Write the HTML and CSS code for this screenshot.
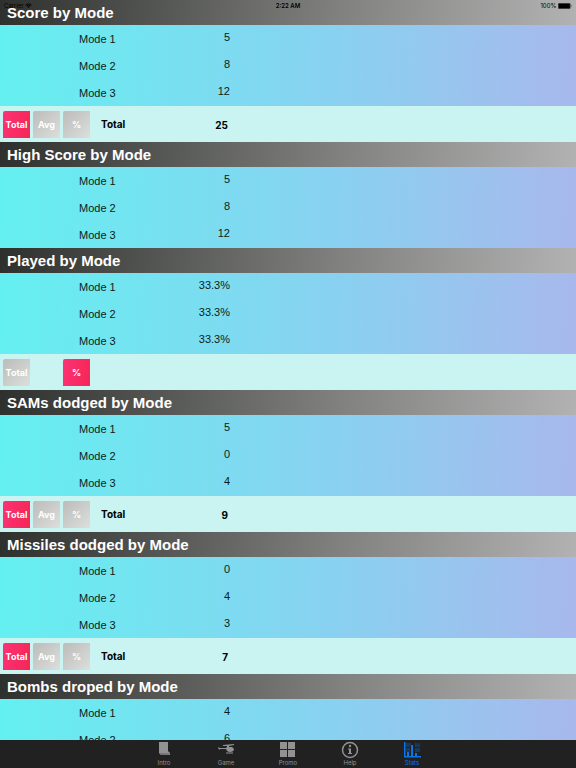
FILE: index.html
```html
<!DOCTYPE html>
<html lang="en">
<head>
  <meta charset="UTF-8" />
  <meta name="viewport" content="width=device-width, initial-scale=1.0" />
  <title>Stats</title>
  <link rel="stylesheet" href="styles.css">
</head>
<body>
  <div class="status-bar">
    <span class="carrier">Carrier
      <svg class="wifi" viewBox="0 0 14 10"><path d="M1 4a9 9 0 0 1 12 0M3 6a6 6 0 0 1 8 0" fill="none" stroke="currentColor" stroke-width="1.8"/><path d="M4.6 7.2a4 4 0 0 1 4.8 0L7 10z" fill="currentColor"/></svg>
    </span>
    <span class="time">2:22 AM</span>
    <span class="battery">100%
      <svg class="battery-icon" viewBox="0 0 28 12"><rect x="0.5" y="0.5" width="24" height="11" rx="2" fill="#555" stroke="#222"/><rect x="1.5" y="1.5" width="22" height="9" rx="1"/><path d="M26 4q2 2 0 4z"/></svg>
    </span>
  </div>

  <main class="stats">
    <section>
      <h2>Score by Mode</h2>
      <table>
        <tr><th scope="row">Mode 1</th><td>5</td></tr>
        <tr><th scope="row">Mode 2</th><td>8</td></tr>
        <tr><th scope="row">Mode 3</th><td>12</td></tr>
      </table>
      <div class="summary">
        <div class="buttons">
          <button type="button" class="active">Total</button>
          <button type="button">Avg</button>
          <button type="button">%</button>
        </div>
        <span class="label">Total</span>
        <span class="sum">25</span>
      </div>
    </section>

    <section>
      <h2>High Score by Mode</h2>
      <table>
        <tr><th scope="row">Mode 1</th><td>5</td></tr>
        <tr><th scope="row">Mode 2</th><td>8</td></tr>
        <tr><th scope="row">Mode 3</th><td>12</td></tr>
      </table>
    </section>

    <section>
      <h2>Played by Mode</h2>
      <table>
        <tr><th scope="row">Mode 1</th><td>33.3%</td></tr>
        <tr><th scope="row">Mode 2</th><td>33.3%</td></tr>
        <tr><th scope="row">Mode 3</th><td>33.3%</td></tr>
      </table>
      <div class="summary">
        <div class="buttons">
          <button type="button">Total</button>
          <button type="button" class="active last">%</button>
        </div>
      </div>
    </section>

    <section>
      <h2>SAMs dodged by Mode</h2>
      <table>
        <tr><th scope="row">Mode 1</th><td>5</td></tr>
        <tr><th scope="row">Mode 2</th><td>0</td></tr>
        <tr><th scope="row">Mode 3</th><td>4</td></tr>
      </table>
      <div class="summary">
        <div class="buttons">
          <button type="button" class="active">Total</button>
          <button type="button">Avg</button>
          <button type="button">%</button>
        </div>
        <span class="label">Total</span>
        <span class="sum">9</span>
      </div>
    </section>

    <section>
      <h2>Missiles dodged by Mode</h2>
      <table>
        <tr><th scope="row">Mode 1</th><td>0</td></tr>
        <tr><th scope="row">Mode 2</th><td>4</td></tr>
        <tr><th scope="row">Mode 3</th><td>3</td></tr>
      </table>
      <div class="summary">
        <div class="buttons">
          <button type="button" class="active">Total</button>
          <button type="button">Avg</button>
          <button type="button">%</button>
        </div>
        <span class="label">Total</span>
        <span class="sum">7</span>
      </div>
    </section>

    <section>
      <h2>Bombs droped by Mode</h2>
      <table>
        <tr><th scope="row">Mode 1</th><td>4</td></tr>
        <tr><th scope="row">Mode 2</th><td>6</td></tr>
      </table>
    </section>
  </main>

  <nav class="tab-bar">
    <a href="#intro">
      <svg viewBox="0 0 18 18"><path d="M4 1h9v9l2 2v2H6l-2-2z"/><path d="M4 12h10l1 2H6z" fill="#777"/></svg>
      Intro
    </a>
    <a href="#game">
      <svg viewBox="0 0 18 18"><path d="M6 4l11-1v1l-5 1v1h3q2 1 2 3-1 2-4 2-3 0-4-3L3 8 2 9 1 6l2 1h6l1-1V5H6z"/><path d="M9 12h7" fill="none" stroke="currentColor" stroke-width="1"/></svg>
      Game
    </a>
    <a href="#promo">
      <svg viewBox="0 0 18 18"><path d="M1 1h7v7H1zM9 1h7v7H9zM1 9h7v7H1zM9 9h7v7H9z"/></svg>
      Promo
    </a>
    <a href="#help">
      <svg viewBox="0 0 18 18"><circle cx="9" cy="9" r="7.500" fill="none" stroke="currentColor" stroke-width="1.500"/><circle cx="9" cy="5" r="1.200"/><path d="M7 7.500h3V12h1v1H7v-1h1V8.500H7z"/></svg>
      Help
    </a>
    <a href="#stats" class="current">
      <svg viewBox="0 0 18 18"><path d="M1 1h1.500v14H18v1.500H1zM4 11h2v4H4zM8 4h2v11H8zM12 12h2v3h-2z"/><path d="M3 3h5M3 5h4M3 8h4M3 10h4M12 3h2M15 3h2M12 5h5M12 8h5M12 10h5" fill="none" stroke="currentColor" stroke-width="1" opacity="0.6"/></svg>
      Stats
    </a>
  </nav>
</body>
</html>
```

FILE: styles.css
```css
* { box-sizing: border-box; }
body { margin: 0; height: 100vh; display: flex; flex-direction: column; overflow: hidden; position: relative; font-family: "Liberation Sans", Arial, sans-serif; font-size: 11px; color: #0c1c20; }

/* status bar floats over the first heading */
.status-bar { position: absolute; top: 0; left: 0; right: 0; display: grid; grid-template-columns: 1fr auto 1fr; padding: 0 4px; line-height: 12px; font-family: Inter, sans-serif; font-size: 6px; color: #000; }
.status-bar .time { font-weight: 600; }
.status-bar .battery { text-align: right; }
.wifi { width: 7px; height: 5px; }
.battery-icon { width: 14px; height: 6px; vertical-align: middle; }

.stats { flex: 1; min-height: 0; overflow: hidden; }
h2 { margin: 0; padding: 0 7px; height: 25px; line-height: 25px; font-size: 15px; color: #fff; background: linear-gradient(95deg, #2e302e, #828381 60%, #b2b2b2); }
table { width: 100%; border-collapse: collapse; background: linear-gradient(92deg, #64f0f0, #8ad0f0 60%, #a8b8ec); }
tr { display: flex; height: 27px; }
th, td { padding: 0; }
th { width: 160px; padding-left: 79px; text-align: left; font-weight: normal; line-height: 29px; }
td { width: 70px; text-align: right; line-height: 25px; }

.summary { display: flex; height: 36px; padding: 5px 3px 4px; background: #caf4f2; font-family: Inter, sans-serif; font-size: 10px; font-weight: 700; color: #000; }
.buttons { display: flex; gap: 3px; width: 87px; }
button { width: 27px; height: 27px; padding: 0; border: 0; border-radius: 2px 0 0 0; font: 700 9px Inter, sans-serif; color: #fff; background: linear-gradient(135deg, #bcbcba, #dcdfdc); }
button.active { background: linear-gradient(100deg, #fb3274, #f62656); }
button.last { margin-left: auto; }
.label { width: 60px; margin-left: 11px; line-height: 26px; }
.sum { width: 67px; text-align: right; line-height: 28px; }

.tab-bar { display: flex; justify-content: center; height: 28px; background: #212121; }
.tab-bar a { width: 62px; display: flex; flex-direction: column; align-items: center; padding-top: 1px; font-family: Inter, sans-serif; font-size: 6px; line-height: 8px; color: #929292; text-decoration: none; }
.tab-bar svg { width: 18px; height: 18px; fill: currentColor; }
.tab-bar .current { color: #0b74e8; }
```
